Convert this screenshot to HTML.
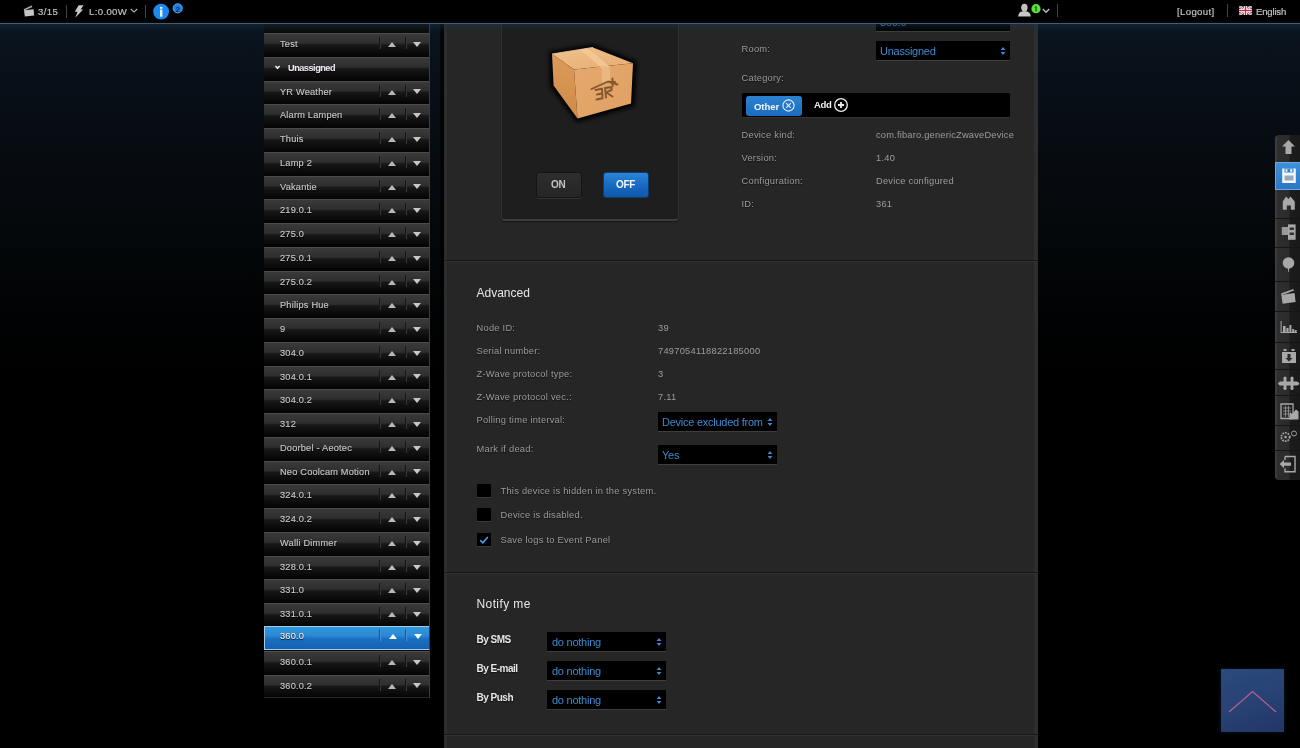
<!DOCTYPE html>
<html><head><meta charset="utf-8">
<style>
*{margin:0;padding:0;box-sizing:border-box}
html,body{width:1300px;height:748px;overflow:hidden;background:#000;font-family:"Liberation Sans",sans-serif;font-size:10px;color:#9a9a9a}
.a{position:absolute}
#wrap{position:absolute;left:0;top:0;width:1300px;height:748px;will-change:transform}
#bg{left:0;top:24px;width:1300px;height:724px;background:linear-gradient(#0a1520 0px,#09111a 30px,#070c12 120px,#040709 220px,#010203 300px,#000 350px)}
#top{left:0;top:0;width:1300px;height:23px;background:#000}
#topline{left:0;top:23px;width:1300px;height:1px;background:#4d5a64}
#glow{left:0;top:24px;width:1300px;height:8px;background:linear-gradient(rgba(30,55,80,0.4),rgba(30,55,80,0))}
#topband{left:0;top:19px;width:1300px;height:4px;background:linear-gradient(rgba(0,5,12,0),rgba(2,10,20,1))}
.sep{width:1px;height:13px;background:#3c3c3c;top:4px}
.tt{color:#c0c0c0;font-size:9.6px;top:6px;line-height:10px;letter-spacing:0.35px;-webkit-text-stroke:0.2px #c0c0c0}
/* list */
#list{left:264px;top:24px;width:166px;height:674.3px;overflow:hidden;background:#0b0b0b;border-right:1px solid #3a3d3c;border-bottom:1px solid #262626}
.it{position:absolute;left:0;width:165px;height:23.76px;background:linear-gradient(#3a3a3a 0%,#2e2e2e 40%,#181818 47%,#0e0e0e 70%,#030303 100%);border-top:1px solid #4c4c4c}
.it span{position:absolute;left:16px;top:5px;color:#c8c8c8;font-size:9.2px;line-height:10px;text-shadow:0 1px 1px #000;letter-spacing:0.22px;-webkit-text-stroke:0.15px #c8c8c8}
.it .s1{position:absolute;left:114.5px;top:3px;width:2px;height:12px;background:linear-gradient(90deg,#141414 50%,#363636 50%)}
.it .s2{position:absolute;left:140.5px;top:3px;width:2px;height:12px;background:linear-gradient(90deg,#141414 50%,#363636 50%)}
.it .up{position:absolute;left:124px;top:8px;width:0;height:0;border-left:4.5px solid transparent;border-right:4.5px solid transparent;border-bottom:5px solid #b8b8b8}
.it .dn{position:absolute;left:149px;top:7.8px;width:0;height:0;border-left:4.5px solid transparent;border-right:4.5px solid transparent;border-top:5px solid #c8c8c8}
.it.sel{background:linear-gradient(#3298dc 0%,#2a88d4 40%,#1a6ec0 55%,#1562b2 100%);border:1px solid #a0cce8;left:0;width:166px;height:24px}
.it.sel span{color:#fff;left:15px;top:4px}
.it.sel .up{border-bottom-color:#fff}
.it.sel .dn{border-top-color:#fff}
.it.sel .s1,.it.sel .s2{background:linear-gradient(90deg,#1a5a9a 50%,#4a90d0 50%)}
/* main */
#mainb{left:440px;top:24px;width:4px;height:724px;background:linear-gradient(90deg,rgba(0,0,0,0.55),rgba(0,0,0,0.8))}
#main{left:444px;top:24px;width:594px;height:724px;background:#262626;border-left:3px solid #2d2d2d;border-right:4px solid #2e2e2e}
.lbl{position:absolute;color:#9c9c9c;font-size:9.3px;line-height:10px;text-shadow:0 1px 1px #111;letter-spacing:0.25px}
.val{position:absolute;color:#9c9c9c;font-size:9.3px;line-height:10px;letter-spacing:0.25px}
.hdr{position:absolute;color:#e6e6e6;font-size:12px;line-height:12px}
.selb{position:absolute;background:#000;border-bottom:1px solid #3e3e3e;color:#3d8ad0;font-size:11px;line-height:11px;letter-spacing:-0.25px}
.selb span{position:absolute;left:4px;top:5px}
.selb i{position:absolute;right:5px;top:5px;width:5px;height:10px}
.cb{position:absolute;left:477px;width:14px;height:14px;background:#000;border-bottom:1px solid #3a3a3a}
.hsep{position:absolute;left:444px;width:594px;height:2px;background:#171717;border-bottom:1px solid #313131}
/* right sidebar */
#rs{left:1275px;top:135px;width:25px;height:345px;background:linear-gradient(90deg,#383838,#2a2a2a 45%,#222 100%);border-radius:4px 0 0 4px}
.ri{position:absolute;left:0;width:25px;height:28.6px;border-bottom:1px solid #1a1a1a}
#totop{left:1221px;top:669px;width:63px;height:63px;background:linear-gradient(#2f4f80,#25396a);}

.it.grp span{left:24px;color:#ece6f4;font-weight:bold;letter-spacing:-0.5px}
.it .chev{position:absolute;left:10.5px;top:6.5px;width:5px;height:5px;border-right:2px solid #f0f0f0;border-bottom:2px solid #f0f0f0;transform:rotate(45deg) scale(0.75)}
.it.sel .up{top:7px;left:123.5px}
.it.sel .dn{top:6.8px;left:148.5px}
.it.sel .s1{left:114px;top:2px}
.it.sel .s2{left:140px;top:2px}
</style></head>
<body><div id="wrap">
<div id="bg" class="a"></div>
<div id="list" class="a">
<div class="it" style="top:9.00px"><span>Test</span><i class="s1"></i><i class="up"></i><i class="s2"></i><i class="dn"></i></div>
<div class="it grp" style="top:32.8px"><b class="chev"></b><span>Unassigned</span></div>
<div class="it" style="top:56.52px"><span>YR Weather</span><i class="s1"></i><i class="up"></i><i class="s2"></i><i class="dn"></i></div>
<div class="it" style="top:80.28px"><span>Alarm Lampen</span><i class="s1"></i><i class="up"></i><i class="s2"></i><i class="dn"></i></div>
<div class="it" style="top:104.04px"><span>Thuis</span><i class="s1"></i><i class="up"></i><i class="s2"></i><i class="dn"></i></div>
<div class="it" style="top:127.80px"><span>Lamp 2</span><i class="s1"></i><i class="up"></i><i class="s2"></i><i class="dn"></i></div>
<div class="it" style="top:151.56px"><span>Vakantie</span><i class="s1"></i><i class="up"></i><i class="s2"></i><i class="dn"></i></div>
<div class="it" style="top:175.32px"><span>219.0.1</span><i class="s1"></i><i class="up"></i><i class="s2"></i><i class="dn"></i></div>
<div class="it" style="top:199.08px"><span>275.0</span><i class="s1"></i><i class="up"></i><i class="s2"></i><i class="dn"></i></div>
<div class="it" style="top:222.84px"><span>275.0.1</span><i class="s1"></i><i class="up"></i><i class="s2"></i><i class="dn"></i></div>
<div class="it" style="top:246.60px"><span>275.0.2</span><i class="s1"></i><i class="up"></i><i class="s2"></i><i class="dn"></i></div>
<div class="it" style="top:270.36px"><span>Philips Hue</span><i class="s1"></i><i class="up"></i><i class="s2"></i><i class="dn"></i></div>
<div class="it" style="top:294.12px"><span>9</span><i class="s1"></i><i class="up"></i><i class="s2"></i><i class="dn"></i></div>
<div class="it" style="top:317.88px"><span>304.0</span><i class="s1"></i><i class="up"></i><i class="s2"></i><i class="dn"></i></div>
<div class="it" style="top:341.64px"><span>304.0.1</span><i class="s1"></i><i class="up"></i><i class="s2"></i><i class="dn"></i></div>
<div class="it" style="top:365.40px"><span>304.0.2</span><i class="s1"></i><i class="up"></i><i class="s2"></i><i class="dn"></i></div>
<div class="it" style="top:389.16px"><span>312</span><i class="s1"></i><i class="up"></i><i class="s2"></i><i class="dn"></i></div>
<div class="it" style="top:412.92px"><span>Doorbel - Aeotec</span><i class="s1"></i><i class="up"></i><i class="s2"></i><i class="dn"></i></div>
<div class="it" style="top:436.68px"><span>Neo Coolcam Motion</span><i class="s1"></i><i class="up"></i><i class="s2"></i><i class="dn"></i></div>
<div class="it" style="top:460.44px"><span>324.0.1</span><i class="s1"></i><i class="up"></i><i class="s2"></i><i class="dn"></i></div>
<div class="it" style="top:484.20px"><span>324.0.2</span><i class="s1"></i><i class="up"></i><i class="s2"></i><i class="dn"></i></div>
<div class="it" style="top:507.96px"><span>Walli Dimmer</span><i class="s1"></i><i class="up"></i><i class="s2"></i><i class="dn"></i></div>
<div class="it" style="top:531.72px"><span>328.0.1</span><i class="s1"></i><i class="up"></i><i class="s2"></i><i class="dn"></i></div>
<div class="it" style="top:555.48px"><span>331.0</span><i class="s1"></i><i class="up"></i><i class="s2"></i><i class="dn"></i></div>
<div class="it" style="top:579.24px"><span>331.0.1</span><i class="s1"></i><i class="up"></i><i class="s2"></i><i class="dn"></i></div>
<div class="it sel" style="top:602.00px"><span>360.0</span><i class="s1"></i><i class="up"></i><i class="s2"></i><i class="dn"></i></div>
<div class="it" style="top:626.76px"><span>360.0.1</span><i class="s1"></i><i class="up"></i><i class="s2"></i><i class="dn"></i></div>
<div class="it" style="top:650.52px"><span>360.0.2</span><i class="s1"></i><i class="up"></i><i class="s2"></i><i class="dn"></i></div>
</div>
<div id="mainb" class="a"></div><div id="main" class="a"></div>
<!-- section 1 -->
<div class="a" style="left:501px;top:20px;width:178px;height:201px;background:#1e1e1e;border:1px solid #303030;border-top:none;border-bottom:2px solid #3c3c3c;border-radius:0 0 4px 4px;box-shadow:0 1px 1px #181818"></div>
<svg class="a" style="left:540px;top:40px" width="100" height="85" viewBox="0 0 100 85">
 <defs><filter id="sh" x="-30%" y="-30%" width="160%" height="160%"><feGaussianBlur stdDeviation="2"/></filter>
 <linearGradient id="gt" x1="0" y1="0" x2="1" y2="1"><stop offset="0" stop-color="#f0c28e"/><stop offset="1" stop-color="#e6ab72"/></linearGradient>
 <linearGradient id="gl" x1="0" y1="0" x2="0" y2="1"><stop offset="0" stop-color="#dc9a58"/><stop offset="1" stop-color="#cf8a48"/></linearGradient>
 <linearGradient id="gf" x1="0" y1="0" x2="1" y2="1"><stop offset="0" stop-color="#e5a86c"/><stop offset="1" stop-color="#e0a062"/></linearGradient></defs>
 <path d="M11 13 L53 6 L95 22.5 L93 65 L37.5 80.5 L12 46.5 Z" fill="#000" stroke="#000" stroke-width="3.5" filter="url(#sh)" opacity="0.95"/>
 <path d="M12 14 L53 7.4 L93 23.3 L34 29.5 Z" fill="url(#gt)"/>
 <path d="M12 14 L34 29.5 L37.5 78.4 L13.6 45.5 Z" fill="url(#gl)"/>
 <path d="M34 29.5 L93 23.3 L91 63.6 L37.5 78.4 Z" fill="url(#gf)"/>
 <path d="M40 9.5 L48 8.3 L70 27 L61.5 27.9 Z" fill="#f3cc9a" opacity="0.75"/>
 <path d="M61.5 27.9 L70 27 L70 42 L62 43 Z" fill="#ecbd88" opacity="0.75"/>
 <g stroke="#85572f" stroke-width="1.9" fill="none" stroke-linecap="round" stroke-linejoin="round">
  <path d="M51.5 49 L68 41.5 L77.5 44.5"/>
  <path d="M72.5 38.5 L72.5 46.5 M70.2 42 L75 42"/>
  <path d="M55.5 50 L62 48.8 L62.5 58.2 L56.5 59.5 M57 54.5 L62 53.5"/>
  <path d="M65 48 L66 57.5 M65.5 48 L70 47.2 Q72.2 47.3 71.6 50 L66 52.3 L72.5 56.5"/>
 </g>
 <path d="M12 14 L53 7.4" stroke="#f6d0a2" stroke-width="0.8"/>
</svg>
<div class="a" style="left:536px;top:172px;width:46px;height:26px;background:linear-gradient(#2e2e2e,#252525);border:1px solid #141414;border-radius:3px;box-shadow:0 1px 0 #333"></div>
<div class="a" style="left:551px;top:180px;color:#c4c4c4;font-size:10px;font-weight:bold;line-height:10px;letter-spacing:-0.2px">ON</div>
<div class="a" style="left:603px;top:172px;width:46px;height:26px;background:linear-gradient(#2a86d8,#1668c0 55%,#0f58a8);border:1px solid #0d3c70;border-radius:3px"></div>
<div class="a" style="left:616px;top:180px;color:#f2f6fa;font-size:10px;font-weight:bold;line-height:10px;letter-spacing:-0.3px">OFF</div>

<div class="selb" style="left:876px;top:10px;width:134px;height:22px"><span style="top:6.5px">360.0</span></div>
<div class="lbl" style="left:741.5px;top:43.5px">Room:</div>
<div class="selb" style="left:876px;top:41px;width:134px;height:20px"><span style="top:4.5px">Unassigned</span><svg style="position:absolute;left:124px;top:5px" width="6" height="10" viewBox="0 0 6 10"><path d="M0.6 4 L3 1 L5.4 4 Z M0.6 6 L3 9 L5.4 6 Z" fill="#3d8ad0"/></svg></div>
<div class="lbl" style="left:741.5px;top:72.8px">Category:</div>
<div class="a" style="left:742px;top:93px;width:268px;height:25px;background:#000;border-radius:2px;border-bottom:1px solid #333"></div>
<div class="a" style="left:746px;top:95.5px;width:56px;height:20px;background:linear-gradient(#2b82d0,#1b6cbd);border-radius:3px"></div>
<div class="a" style="left:754px;top:101.5px;color:#f0f4f8;font-size:9.6px;font-weight:bold;line-height:10px;letter-spacing:-0.1px">Other</div>
<svg class="a" style="left:781px;top:98px" width="15" height="15" viewBox="0 0 15 15"><circle cx="7.5" cy="7.5" r="5.6" stroke="#e8f0f8" stroke-width="1.1" fill="none"/><path d="M5.2 5.2 L9.8 9.8 M9.8 5.2 L5.2 9.8" stroke="#e8f0f8" stroke-width="1.1"/></svg>
<div class="a" style="left:814px;top:100px;color:#eeeeee;font-size:9.5px;font-weight:bold;line-height:10px;letter-spacing:-0.3px">Add</div>
<svg class="a" style="left:833px;top:97px" width="16" height="16" viewBox="0 0 16 16"><circle cx="8" cy="8" r="6.3" stroke="#eee" stroke-width="1.3" fill="none"/><path d="M8 5 L8 11 M5 8 L11 8" stroke="#eee" stroke-width="1.8"/></svg>

<div class="lbl" style="left:741.5px;top:130px">Device kind:</div><div class="val" style="left:876px;top:130px;letter-spacing:0.2px">com.fibaro.genericZwaveDevice</div>
<div class="lbl" style="left:741.5px;top:153px">Version:</div><div class="val" style="left:876px;top:153px">1.40</div>
<div class="lbl" style="left:741.5px;top:176px">Configuration:</div><div class="val" style="left:876px;top:176px;letter-spacing:0.2px">Device configured</div>
<div class="lbl" style="left:741.5px;top:199px">ID:</div><div class="val" style="left:876px;top:199px">361</div>

<div class="hsep" style="top:260px"></div>
<!-- section 2 -->
<div class="hdr" style="left:476.5px;top:286.5px">Advanced</div>
<div class="lbl" style="left:476.5px;top:323.3px">Node ID:</div><div class="val" style="left:658px;top:323.3px">39</div>
<div class="lbl" style="left:476.5px;top:345.5px">Serial number:</div><div class="val" style="left:658px;top:345.5px">7497054118822185000</div>
<div class="lbl" style="left:476.5px;top:368.5px">Z-Wave protocol type:</div><div class="val" style="left:658px;top:368.5px">3</div>
<div class="lbl" style="left:476.5px;top:391.5px">Z-Wave protocol vec.:</div><div class="val" style="left:658px;top:391.5px">7.11</div>
<div class="lbl" style="left:476.5px;top:414.5px">Polling time interval:</div>
<div class="selb" style="left:658px;top:412px;width:119px;height:20px;overflow:hidden"><span style="top:4.5px;white-space:nowrap">Device excluded from</span><svg style="position:absolute;left:109px;top:5px" width="6" height="10" viewBox="0 0 6 10"><path d="M0.6 4 L3 1 L5.4 4 Z M0.6 6 L3 9 L5.4 6 Z" fill="#3d8ad0"/></svg></div>
<div class="lbl" style="left:476.5px;top:443.5px">Mark if dead:</div>
<div class="selb" style="left:658px;top:445px;width:119px;height:20px"><span style="top:4.5px">Yes</span><svg style="position:absolute;left:109px;top:5px" width="6" height="10" viewBox="0 0 6 10"><path d="M0.6 4 L3 1 L5.4 4 Z M0.6 6 L3 9 L5.4 6 Z" fill="#3d8ad0"/></svg></div>
<div class="cb" style="top:484px"></div><div class="lbl" style="left:500.5px;top:486px">This device is hidden in the system.</div>
<div class="cb" style="top:508px"></div><div class="lbl" style="left:500.5px;top:509.5px">Device is disabled.</div>
<div class="cb" style="top:532.7px"></div><div class="lbl" style="left:500.5px;top:535px">Save logs to Event Panel</div>
<svg class="a" style="left:478px;top:534px" width="12" height="12" viewBox="0 0 12 12"><path d="M2.2 6.2 L4.8 8.8 L9.8 3" stroke="#4aa2ee" stroke-width="1.6" fill="none"/></svg>

<div class="hsep" style="top:571.5px"></div>
<!-- section 3 -->
<div class="hdr" style="left:476.5px;top:598px;letter-spacing:0.4px">Notify me</div>
<div class="lbl" style="left:476.5px;top:635px;font-weight:bold;color:#e6e6e6;font-size:10px;letter-spacing:-0.5px">By SMS</div>
<div class="selb" style="left:547px;top:632px;width:119px;height:20px"><span style="top:4.5px;left:5px">do nothing</span><svg style="position:absolute;left:109px;top:5px" width="6" height="10" viewBox="0 0 6 10"><path d="M0.6 4 L3 1 L5.4 4 Z M0.6 6 L3 9 L5.4 6 Z" fill="#3d8ad0"/></svg></div>
<div class="lbl" style="left:476.5px;top:664px;font-weight:bold;color:#e6e6e6;font-size:10px;letter-spacing:-0.5px">By E-mail</div>
<div class="selb" style="left:547px;top:661px;width:119px;height:20px"><span style="top:4.5px;left:5px">do nothing</span><svg style="position:absolute;left:109px;top:5px" width="6" height="10" viewBox="0 0 6 10"><path d="M0.6 4 L3 1 L5.4 4 Z M0.6 6 L3 9 L5.4 6 Z" fill="#3d8ad0"/></svg></div>
<div class="lbl" style="left:476.5px;top:693px;font-weight:bold;color:#e6e6e6;font-size:10px;letter-spacing:-0.5px">By Push</div>
<div class="selb" style="left:547px;top:690px;width:119px;height:20px"><span style="top:4.5px;left:5px">do nothing</span><svg style="position:absolute;left:109px;top:5px" width="6" height="10" viewBox="0 0 6 10"><path d="M0.6 4 L3 1 L5.4 4 Z M0.6 6 L3 9 L5.4 6 Z" fill="#3d8ad0"/></svg></div>
<div class="hsep" style="top:734px"></div>

<div id="glow" class="a"></div><div id="top" class="a"></div><div id="topband" class="a"></div><div id="topline" class="a"></div>
<svg class="a" style="left:22px;top:4px" width="14" height="14" viewBox="0 0 14 14">
 <path d="M2 6.2 L11.6 5.2 L12.2 11.4 L2.8 12.6 Z" fill="#c4c4c4"/>
 <path d="M1.6 5.2 L9.8 1.6 L10.4 3.0 L2.2 6.4 Z" fill="#b0b0b0"/>
</svg>
<div class="a tt" style="left:38px;top:6.5px">3/15</div>
<div class="a sep" style="left:65.5px;top:4.5px;width:1.5px;background:#454545"></div>
<svg class="a" style="left:74px;top:5px" width="10" height="13" viewBox="0 0 10 13">
 <path d="M4.6 0.2 L9.6 0.2 L6.6 4.4 L9.2 4.4 L1.2 12.8 L3.6 6.8 L0.8 6.8 Z" fill="#c8c8c8"/>
</svg>
<div class="a tt" style="left:89px;top:6.5px">L:0.00W</div>
<svg class="a" style="left:130px;top:8px" width="8" height="6" viewBox="0 0 8 6">
 <path d="M0.8 1 L4 4.1 L7.2 1" stroke="#b8b8b8" stroke-width="1.1" fill="none"/>
</svg>
<div class="a sep" style="left:144.5px;top:5px;width:1.5px;background:#454545"></div>
<svg class="a" style="left:152px;top:3px" width="18" height="18" viewBox="0 0 18 18">
 <circle cx="9.1" cy="8.6" r="7.9" fill="#1b8af0"/>
 <rect x="8" y="3.9" width="2.4" height="1.9" fill="#e8f4ff"/>
 <rect x="8" y="6.6" width="2.4" height="7.1" fill="#e8f4ff"/>
</svg>
<svg class="a" style="left:172px;top:3px" width="12" height="11" viewBox="0 0 12 11">
 <circle cx="5.7" cy="5.3" r="4.6" fill="#1d7fe0" stroke="#5ab0ff" stroke-width="0.9"/>
 <text x="5.7" y="8.6" font-family="Liberation Sans" font-weight="bold" font-size="8" fill="#0b2a6a" text-anchor="middle">2</text>
</svg>

<svg class="a" style="left:1017px;top:3px" width="15" height="14" viewBox="0 0 15 14">
 <ellipse cx="7.4" cy="4.6" rx="3.2" ry="3.9" fill="#c2c2c2"/>
 <path d="M1.2 13.4 C1.4 10 3.4 8.6 5.6 8.2 L9.2 8.2 C11.6 8.6 13.6 10 13.8 13.4 Z" fill="#c8c8c8"/>
</svg>
<svg class="a" style="left:1030px;top:3px" width="12" height="12" viewBox="0 0 12 12">
 <circle cx="6" cy="5.7" r="4.6" fill="#5ee23a"/>
 <path d="M5.4 3.2 L6.8 3.2 L6.8 8.6 L5.4 8.6 Z M4.2 4.6 L5.6 3.2 L5.6 4.8 Z" fill="#116f10"/>
</svg>
<svg class="a" style="left:1042px;top:8px" width="8" height="6" viewBox="0 0 8 6">
 <path d="M0.8 1 L4 4.3 L7.2 1" stroke="#c0c0c0" stroke-width="1.3" fill="none"/>
</svg>
<div class="a sep" style="left:1056.5px;top:3.5px;width:1.5px;background:#454545"></div>

<div class="a tt" style="left:1177px;top:6.5px;color:#bdbdbd">[Logout]</div>
<div class="a sep" style="left:1226.5px;top:4px;width:1.5px;background:#454545"></div>
<svg class="a" style="left:1239px;top:6px" width="13" height="9" viewBox="0 0 13 9">
 <rect width="13" height="9" fill="#3a4fa0"/>
 <path d="M0 0 L13 9 M13 0 L0 9" stroke="#fff" stroke-width="2.2"/>
 <path d="M0 0 L13 9 M13 0 L0 9" stroke="#d03040" stroke-width="0.8"/>
 <rect x="5" y="0" width="3" height="9" fill="#fff"/>
 <rect x="0" y="3" width="13" height="3" fill="#fff"/>
 <rect x="5.8" y="0" width="1.4" height="9" fill="#d02838"/>
 <rect x="0" y="3.8" width="13" height="1.4" fill="#d02838"/>
</svg>
<div class="a tt" style="left:1256px;top:6.5px;letter-spacing:-0.2px">English</div>

<div class="a" style="left:1275px;top:135.4px;width:25px;height:344.4px;background:linear-gradient(90deg,#3c3c3c 0,#3c3c3c 1.5px,#2e2e2e 2px,#2b2b2b 14px,#1c1c1c 15px,#191919 100%);border-radius:4px 0 0 4px"></div>
<div class="a" style="left:1275px;top:161.5px;width:25px;height:1px;background:#151515"></div>
<div class="a" style="left:1274.5px;top:162px;width:25.5px;height:27.5px;background:linear-gradient(#3f8fd8,#2a78c4);border:1px solid #6aaae0;border-right:none"></div>
<div class="a" style="left:1275px;top:217.5px;width:25px;height:1px;background:#151515"></div>
<div class="a" style="left:1275px;top:247px;width:25px;height:1px;background:#151515"></div>
<div class="a" style="left:1275px;top:280.5px;width:25px;height:1px;background:#151515"></div>
<div class="a" style="left:1275px;top:310.5px;width:25px;height:1px;background:#151515"></div>
<div class="a" style="left:1275px;top:342px;width:25px;height:1px;background:#151515"></div>
<div class="a" style="left:1275px;top:368.5px;width:25px;height:1px;background:#151515"></div>
<div class="a" style="left:1275px;top:395px;width:25px;height:1px;background:#151515"></div>
<div class="a" style="left:1275px;top:424.5px;width:25px;height:1px;background:#151515"></div>
<div class="a" style="left:1275px;top:449.5px;width:25px;height:1px;background:#151515"></div>
<svg class="a" style="left:1276px;top:135px" width="24" height="345" viewBox="0 0 24 345">
 <g fill="#a8a8a8">
  <!-- up arrow 140-154 -->
  <path d="M12.5 5 L19 11.5 L15.5 11.5 L15.5 19 L9.5 19 L9.5 11.5 L6 11.5 Z"/>
  <!-- home 196.4-209.7 -->
  <path d="M6.8 74.7 L6.8 66.5 L10 61.5 L12.5 64 L14.5 61.5 L18.8 66.5 L18.8 74.7 L14.8 74.7 L14.8 70.5 L10.8 70.5 L10.8 74.7 Z"/>
  <!-- devices 224.4-239.8 -->
  <path d="M5.8 92 L13 92 L13 100 L5.8 100 Z" fill="#9a9a9a"/>
  <path d="M12 89.4 L19.6 89.4 L19.6 104.8 L12 104.8 Z"/>
  <path d="M13.6 92.5 L18 92.5 L18 95 L13.6 95 Z M13.6 97.5 L18 97.5 L18 100 L13.6 100 Z" fill="#333"/>
  <!-- pin 257-272 -->
  <circle cx="12.5" cy="128" r="5.8"/>
  <path d="M11.8 132 L13.2 132 L12.8 137 L12.2 137 Z"/>
  <!-- clapboard 289-303.7 -->
  <path d="M5.4 160 L18.6 158 L19.6 167 L6.6 168.7 Z"/>
  <path d="M5 158.6 L17.4 154 L18 155.6 L5.6 160.2 Z"/>
  <!-- chart 321-333 -->
  <path d="M4.6 186 L5.6 186 L5.6 197.5 L4.6 197.5 Z M7 191 L9.6 191 L9.6 197 L7 197 Z M10.4 193 L12.6 193 L12.6 197 L10.4 197 Z M13.4 190 L15.4 190 L15.4 197 L13.4 197 Z M16.2 194 L18 194 L18 197 L16.2 197 Z M18.6 195 L20.6 195 L20.6 197 L18.6 197 Z M4.6 197 L21 197 L21 198 L4.6 198 Z"/>
  <!-- backup 349-363 -->
  <path d="M6 217 L20 217 L20 228 L6 228 Z M7.5 214 L10.5 214 L10.5 216 L7.5 216 Z M15.5 214 L18.5 214 L18.5 216 L15.5 216 Z"/>
  <path d="M11.5 219 L14.5 219 L14.5 223 L16.5 223 L13 226.5 L9.5 223 L11.5 223 Z" fill="#2a2a2a"/>
  <!-- puzzle 377.8-388.3 -->
  <path d="M7.6 243 L10.4 243 L10.4 246.6 L14.6 246.6 L14.6 243 L17.4 243 L17.4 246.6 L21.5 246.6 L21.5 250.4 L17.4 250.4 L17.4 253.6 L14.6 253.6 L14.6 250.4 L10.4 250.4 L10.4 253.6 L7.6 253.6 L7.6 250.4 L3.6 250.4 L3.6 246.6 L7.6 246.6 Z"/>
  <circle cx="3.8" cy="248.5" r="1.6"/><circle cx="21.6" cy="248.5" r="1.6"/><circle cx="9" cy="243" r="1.5"/><circle cx="16" cy="243" r="1.5"/><circle cx="9" cy="253.6" r="1.5"/><circle cx="16" cy="253.6" r="1.5"/>
  <!-- calendar 403.5-419.6 -->
  <path d="M5 269 L17 269 L17 283.5 L5 283.5 Z" fill="none" stroke="#a8a8a8" stroke-width="1.3"/>
  <path d="M7 273 L15 273 M7 276 L15 276 M7 279 L15 279 M9.5 271 L9.5 282 M12.5 271 L12.5 282" stroke="#999" stroke-width="0.8"/>
  <path d="M14 277 L16 279 L20 274.5 L22.5 276.5 L22.5 284.5 L13 284.5 Z"/>
  <!-- gears 431.6-442 -->
  <circle cx="9.5" cy="302" r="4.2" fill="none" stroke="#a8a8a8" stroke-width="1.8" stroke-dasharray="1.6 1.1"/>
  <circle cx="9.5" cy="302" r="1.3"/>
  <circle cx="18" cy="298.5" r="2.5" fill="none" stroke="#a8a8a8" stroke-width="0.9"/>
  <!-- logout 456.5-471.7 -->
  <path d="M9 321.5 L19 321.5 L19 336.7 L9 336.7 L9 333.5 M9 325 L9 321.5" fill="none" stroke="#a8a8a8" stroke-width="1.4"/>
  <path d="M3.6 329 L8 325 L8 327.4 L15 327.4 L15 330.8 L8 330.8 L8 333.2 Z"/>
 </g>
 <!-- save (white) 168-183 -->
 <path d="M6.2 33.5 L19.8 33.5 L19.8 48 L6.2 48 Z" fill="#f4f8fc"/>
 <path d="M8.5 33.5 L8.5 37.5 L17.5 37.5 L17.5 33.5 Z" fill="#3586d0"/>
 <path d="M9.6 34.3 L11.4 34.3 L11.4 36.8 L9.6 36.8 Z M14.2 34.3 L16.2 34.3 L16.2 36.8 L14.2 36.8 Z" fill="#f4f8fc"/>
 <path d="M8.5 40.5 L17.5 40.5 L17.5 45.5 L8.5 45.5 Z" fill="#9ab"/>
</svg>
<div class="a" style="left:1221px;top:669px;width:63px;height:63px;background:linear-gradient(160deg,#2b4a7c 0%,#284274 50%,#23356a 100%);box-shadow:0 0 4px 1px #0a0f1a"></div>
<svg class="a" style="left:1221px;top:669px" width="63" height="63" viewBox="0 0 63 63"><path d="M8 43 L31.5 22.5 L55 43" stroke="#c0608e" stroke-width="1.1" fill="none"/></svg>

</div></body></html>
